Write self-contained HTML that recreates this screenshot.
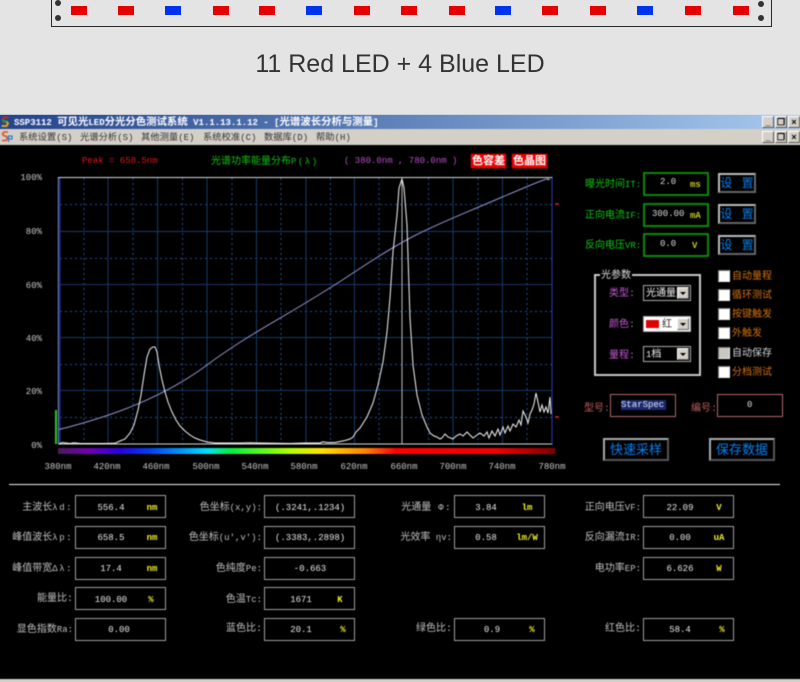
<!DOCTYPE html>
<html><head><meta charset="utf-8">
<style>
html,body{margin:0;padding:0;background:#e4e4e4}
#p{position:relative;width:800px;height:682px;overflow:hidden;background:#e4e4e4;font-family:"Liberation Mono","Noto Sans CJK SC",monospace;font-size:10px}
#p div,#p span.t{position:absolute}
.t{white-space:nowrap;line-height:12px}
.l{font-size:9px}
.w{font-size:9px;letter-spacing:1.5px}
.led{top:6px;width:16px;height:9px;background:#e60000}
.b{background:#0033f0!important}
.dot{width:6px;height:6px;border-radius:50%;background:#333}
.box{border:1px solid #a0a0a0;box-sizing:border-box;height:23px}
.lb{color:#c0c0c0;text-align:right;width:80px;margin-top:1px}
.v{color:#e8e8e8;text-align:center;width:70px;font-size:9px;margin-top:1px}
.u{color:#f0f020;text-align:center;width:40px;font-size:9px;font-weight:bold}
.gb{border:2px solid #0a8a0a;box-sizing:border-box;width:66px;height:24px;left:643px}
.gl{color:#10c810;font-size:10px;left:585px;margin-top:1px}
.set{left:718px;width:38px;height:20px;box-sizing:border-box;border:2px solid #888;border-color:#bbb #666 #666 #bbb;color:#0a80f0;text-align:center;line-height:16px;font-size:12px;word-spacing:6px;font-family:"Liberation Sans","Noto Sans CJK SC",sans-serif}
.ck{left:718px;width:10px;height:10px;background:#fff;border:1px solid #999;border-color:#777 #eee #eee #777}
.cl{left:732px;color:#d07010;font-size:10px;margin-top:3px}
.pl{color:#c858d8;left:609px;font-size:10px;margin-top:2px}
.cb{left:643px;width:48px;height:16px;box-sizing:border-box;border:1px solid #aaa;background:#000;color:#eee;font-size:10px;line-height:17px;padding-left:2px}
.ar{right:1px;top:1px;width:12px;height:12px;background:#d4d0c8;border:1px solid #eee;border-color:#fff #666 #666 #fff;box-sizing:border-box}
.ar:after{content:"";position:absolute;left:2px;top:4px;border:3px solid transparent;border-top:3px solid #000}
.wb{width:12px;height:12px;box-sizing:border-box;background:#d4d0c8;border:1px solid #888;border-color:#fff #555 #555 #fff;color:#000;font:bold 9px/10px "Liberation Sans",sans-serif;text-align:center}
.mn{color:#333;top:132px;font-size:9.3px}
.pk{color:#fff;background:#ee0000;top:154px;height:14px;width:35px;text-align:center;font:bold 11px/14px "Liberation Sans","Noto Sans CJK SC",sans-serif;box-shadow:0 0 1px #f00}
.bb{top:438px;width:66px;height:23px;box-sizing:border-box;border:2px solid #888;border-color:#aaa #555 #555 #aaa;color:#0a80f0;text-align:center;font:13px/19px "Liberation Sans","Noto Sans CJK SC",sans-serif}
.x{color:#c8c8c8;font-size:9px;top:461px;width:40px;text-align:center}
.y{color:#c8c8c8;font-size:9px;left:12px;width:30px;text-align:right;margin-top:1px}
#scr{filter:blur(.4px)}
</style></head><body><div id="p">

<div style="left:51px;top:-2px;width:721px;height:29px;border:1px solid #2a2a2a;box-sizing:border-box"></div>
<div class="dot" style="left:55px;top:0"></div><div class="dot" style="left:55px;top:15px"></div>
<div class="dot" style="left:758px;top:1px"></div><div class="dot" style="left:758px;top:15px"></div>
<div class="led" style="left:71px"></div><div class="led" style="left:118px"></div><div class="led b" style="left:165px"></div><div class="led" style="left:213px"></div><div class="led" style="left:259px"></div><div class="led b" style="left:306px"></div><div class="led" style="left:354px"></div><div class="led" style="left:401px"></div><div class="led" style="left:449px"></div><div class="led b" style="left:495px"></div><div class="led" style="left:542px"></div><div class="led" style="left:590px"></div><div class="led b" style="left:637px"></div><div class="led" style="left:685px"></div><div class="led" style="left:733px"></div>
<span class="t" style="left:0;width:800px;text-align:center;top:50px;font:25px/28px 'Liberation Sans',sans-serif;color:#333">11 Red LED + 4 Blue LED</span>

<!-- solid backing so the blur filter does not lighten the page edges -->
<div style="left:0;top:115px;width:800px;height:14px;background:linear-gradient(90deg,#24438d 0,#6083bb 50%,#a8caef 100%)"></div>
<div style="left:0;top:129px;width:800px;height:16px;background:#d4d0c8"></div>
<div style="left:0;top:145px;width:800px;height:534px;background:#000"></div>
<div style="left:0;top:679px;width:800px;height:3px;background:#d4d0c8"></div>

<div id="scr" style="left:0;top:0;width:800px;height:682px">
<div style="left:0;top:115px;width:800px;height:14px;background:linear-gradient(90deg,#24438d 0,#6083bb 50%,#a8caef 100%)"></div>
<div style="left:0;top:129px;width:800px;height:16px;background:#d4d0c8"></div>
<div style="left:0;top:145px;width:800px;height:534px;background:#000"></div>
<div style="left:0;top:679px;width:800px;height:3px;background:#d4d0c8"></div>

<svg style="position:absolute;left:0;top:115px" width="14" height="14" viewBox="0 0 14 14"><path d="M8 2.500H4L2.500 4.500" fill="none" stroke="#d02020" stroke-width="2"/><path d="M2.500 4.500L3.500 6.500H6.500" fill="none" stroke="#20a030" stroke-width="2"/><path d="M6.500 6.500L8 8.500L6.500 11H1.500" fill="none" stroke="#e0a020" stroke-width="2"/></svg>
<span class="t" style="left:14px;top:117px;color:#fff;font-weight:bold;font-size:10.4px"><span class="l">SSP3112 </span>可见光<span class="l">LED</span>分光分色测试系统<span class="l"> V1.1.13.1.12 - [</span>光谱波长分析与测量<span class="l">]</span></span>
<svg style="position:absolute;left:1px;top:130px" width="13" height="14" viewBox="0 0 13 14"><path d="M7 2H3L1.500 4L3 6H5L6.500 8L5 10.500H1" fill="none" stroke="#d85030" stroke-width="1.600"/><path d="M7.500 12V6H11V9H8" fill="none" stroke="#3080c0" stroke-width="1.300"/></svg>
<span class="t mn" style="left:19px">系统设置<span class="l">(S)</span></span>
<span class="t mn" style="left:80px">光谱分析<span class="l">(S)</span></span>
<span class="t mn" style="left:141px">其他测量<span class="l">(E)</span></span>
<span class="t mn" style="left:203px">系统校准<span class="l">(C)</span></span>
<span class="t mn" style="left:264px">数据库<span class="l">(D)</span></span>
<span class="t mn" style="left:316px">帮助<span class="l">(H)</span></span>
<div class="wb" style="left:762px;top:116px">_</div><div class="wb" style="left:775px;top:116px">&#10064;</div><div class="wb" style="left:788px;top:116px">×</div>
<div class="wb" style="left:762px;top:131px">_</div><div class="wb" style="left:775px;top:131px">&#10064;</div><div class="wb" style="left:788px;top:131px">×</div>

<span class="t" style="left:82px;top:155px;color:#e01818;font-size:9px">Peak = 658.5nm</span>
<span class="t" style="left:211px;top:156px;color:#10c010">光谱功率能量分布<span class="w">P(λ)</span></span>
<span class="t" style="left:344px;top:155px;color:#b850c8;font-size:9px">( 380.0nm , 780.0nm )</span>
<div class="pk" style="left:471px">色容差</div><div class="pk" style="left:512px">色晶图</div>

<svg style="position:absolute;left:0;top:0" width="800" height="682" viewBox="0 0 800 682">
<g fill="none" stroke="#143a68" stroke-width="1">
<path d="M108 178V444M157.500 178V444M207 178V444M256.500 178V444M306 178V444M354.500 178V444M453 178V444M502.500 178V444M60 231.500H552M60 284.500H552M60 337.500H552M60 390.500H552"/>
<path stroke="#1c5090" stroke-dasharray="2 3" d="M84 178V444M133 178V444M182.500 178V444M232 178V444M281 178V444M330.500 178V444M379 178V444M428.500 178V444M478 178V444M527 178V444M60 204.500H552M60 258.500H552M60 311.500H552M60 364.500H552M60 417.500H552"/>
</g>
<rect x="58.500" y="177.500" width="493.500" height="266.500" fill="none" stroke="#d8d8d8"/>
<path d="M59.500 178V444" stroke="#1a2f9a" stroke-width="2"/>
<path d="M552 178V444" stroke="#2a3fb0" stroke-width="1"/>
<path d="M402 179V444" stroke="#bbb" stroke-width="1"/>
<path d="M56 410V444" stroke="#2fc82f" stroke-width="2"/>
<path d="M555 204H559M555 417H559" stroke="#e02020" stroke-width="1.500"/>
<path fill="none" stroke="#9494d0" stroke-width="1" d="M59 429.500C105 418 160 400 207 365S290 315 353 273S430 228 500 198S540 183 550 179"/>
<path fill="none" stroke="#f4f4f4" stroke-width="1" d="M59 444L62 442.500L66 443L70 443.500L74 442.800L80 443.500L90 443.500L105 443.500L115 443.300L120 441L125 439L130 433L134 425L138 410L141 395L144 375L147 357L150 349L153 347L155 347L157 352L159 365L162 380L165 392L168 402L172 412L176 420L180 426L185 431L190 435L195 438L200 440L207 442L215 443L240 443L250 442.800L260 443L290 443.500L305 443L320 443L323 441.800L327 442.500L335 442.500L345 440.500L350 439L353 437L356 432L360 428L367 417L373 403L378 385L383 362L387 332L390 298L393 252L397 215L399 188L402 179L404 188L407 225L410 318L413 365L417 395L422 415L427 427L430 433L434 436L437 437L440 439L442 438L445 434L448 437L453 439L456 436L460 434L463 436L467 432L470 435L473 438L477 435L480 433L484 436L487 432L489 438L492 431L495 436L498 429L500 435L503 427L505 433L508 426L510 431L513 424L516 427L519 420L521 425L523 411L526 417L528 423L530 414L532 410L534 404L536 393L538 402L540 412L542 405L544 412L546 407L548 413L550 397L551 414"/>
</svg>
<div style="left:58px;top:448px;width:497px;height:6px;background:linear-gradient(90deg,#4a1a5a 0,#7000b0 6%,#2a00e0 12.500%,#0040f0 18.500%,#00e0ff 30%,#00f040 34.600%,#b0ff00 46.700%,#ffe000 53%,#ff8000 62%,#ff0000 68%,#f00000 88%,#800000 100%)"></div>

<span class="t y" style="top:171px">100%</span><span class="t y" style="top:225px">80%</span><span class="t y" style="top:279px">60%</span><span class="t y" style="top:332px">40%</span><span class="t y" style="top:385px">20%</span><span class="t y" style="top:439px">0%</span>
<span class="t x" style="left:38px">380nm</span><span class="t x" style="left:87px">420nm</span><span class="t x" style="left:136px">460nm</span><span class="t x" style="left:186px">500nm</span><span class="t x" style="left:235px">540nm</span><span class="t x" style="left:284px">580nm</span><span class="t x" style="left:334px">620nm</span><span class="t x" style="left:384px">660nm</span><span class="t x" style="left:433px">700nm</span><span class="t x" style="left:482px">740nm</span><span class="t x" style="left:532px">780nm</span>

<span class="t gl" style="top:178px">曝光时间<span class="l">IT:</span></span><div class="gb" style="top:172px"></div>
<span class="t" style="left:660px;top:176px;color:#ddd;font-size:9px">2.0</span><span class="t" style="left:690px;top:179px;color:#c8c820;font-size:9px;font-weight:bold">ms</span>
<div class="set" style="top:173px">设 置</div>
<span class="t gl" style="top:209px">正向电流<span class="l">IF:</span></span><div class="gb" style="top:203px"></div>
<span class="t" style="left:652px;top:208px;color:#ddd;font-size:9px">300.00</span><span class="t" style="left:690px;top:210px;color:#c8c820;font-size:9px;font-weight:bold">mA</span>
<div class="set" style="top:204px">设 置</div>
<span class="t gl" style="top:239px">反向电压<span class="l">VR:</span></span><div class="gb" style="top:233px"></div>
<span class="t" style="left:660px;top:238px;color:#ddd;font-size:9px">0.0</span><span class="t" style="left:692px;top:240px;color:#c8c820;font-size:9px;font-weight:bold">V</span>
<div class="set" style="top:235px">设 置</div>

<div style="left:594px;top:274px;width:107px;height:102px;box-sizing:border-box;border:2px solid #c8c8c8"></div>
<span class="t" style="left:600px;top:271px;background:#000;color:#ddd;padding:0 1px;font-size:10px">光参数</span>
<span class="t pl" style="top:287px">类型:</span><div class="cb" style="top:285px">光通量<div class="ar"></div></div>
<span class="t pl" style="top:318px">颜色:</span><div class="cb" style="top:316px;background:#fff;color:#222"><span class="t" style="left:2px;top:3px;width:13px;height:8px;background:#e00000;display:block"></span><span class="t" style="left:18px;top:3px">红</span><div class="ar"></div></div>
<span class="t pl" style="top:349px">量程:</span><div class="cb" style="top:346px"><span class="l">1</span>档<div class="ar"></div></div>

<div class="ck" style="top:270px"></div><span class="t cl" style="top:269px">自动量程</span>
<div class="ck" style="top:289px"></div><span class="t cl" style="top:288px">循环测试</span>
<div class="ck" style="top:308px"></div><span class="t cl" style="top:307px">按键触发</span>
<div class="ck" style="top:327px"></div><span class="t cl" style="top:326px">外触发</span>
<div class="ck" style="top:347px;background:#c8c8c0"></div><span class="t cl" style="top:346px;color:#d0d0d0">自动保存</span>
<div class="ck" style="top:366px"></div><span class="t cl" style="top:365px">分档测试</span>

<span class="t" style="left:584px;top:404px;color:#c05c5c">型号:</span>
<div style="left:610px;top:394px;width:66px;height:23px;box-sizing:border-box;border:1px solid #b06868"></div>
<div style="left:621px;top:400px;width:45px;height:10px;background:#1a2a70"></div>
<span class="t" style="left:621px;top:399px;color:#e8e8f0;font-size:9px">StarSpec</span>
<span class="t" style="left:691px;top:404px;color:#c05c5c">编号:</span>
<div style="left:717px;top:394px;width:66px;height:23px;box-sizing:border-box;border:1px solid #b06868"></div>
<span class="t" style="left:747px;top:399px;color:#ddd;font-size:9px">0</span>
<div class="bb" style="left:603px">快速采样</div><div class="bb" style="left:709px">保存数据</div>

<div style="left:9px;top:484px;width:771px;height:1px;background:#eee"></div>

<!-- column 1 -->
<span class="t lb" style="left:-7px;top:501px">主波长<span class="w">λd:</span></span><div class="box" style="left:75px;top:495px;width:91px"></div><span class="t v" style="left:76px;top:501px">556.4</span><span class="t u" style="left:132px;top:502px">nm</span>
<span class="t lb" style="left:-7px;top:531px">峰值波长<span class="w">λp:</span></span><div class="box" style="left:75px;top:526px;width:91px"></div><span class="t v" style="left:76px;top:531px">658.5</span><span class="t u" style="left:132px;top:532px">nm</span>
<span class="t lb" style="left:-7px;top:562px">峰值带宽<span class="w">Δλ:</span></span><div class="box" style="left:75px;top:557px;width:91px"></div><span class="t v" style="left:76px;top:562px">17.4</span><span class="t u" style="left:132px;top:563px">nm</span>
<span class="t lb" style="left:-7px;top:593px">能量比:</span><div class="box" style="left:75px;top:587px;width:91px"></div><span class="t v" style="left:76px;top:593px">100.00</span><span class="t u" style="left:131px;top:594px">%</span>
<span class="t lb" style="left:-7px;top:623px">显色指数<span class="l">Ra:</span></span><div class="box" style="left:75px;top:618px;width:91px"></div><span class="t v" style="left:84px;top:623px">0.00</span>
<!-- column 2 -->
<span class="t lb" style="left:182px;top:501px;width:80px">色坐标<span class="l">(x,y):</span></span><div class="box" style="left:264px;top:495px;width:91px"></div><span class="t v" style="left:275px;top:501px">(.3241,.1234)</span>
<span class="t lb" style="left:172px;top:531px;width:90px">色坐标<span class="l">(u',v'):</span></span><div class="box" style="left:264px;top:526px;width:91px"></div><span class="t v" style="left:275px;top:531px">(.3383,.2898)</span>
<span class="t lb" style="left:182px;top:562px">色纯度<span class="l">Pe:</span></span><div class="box" style="left:264px;top:557px;width:91px"></div><span class="t v" style="left:275px;top:562px">-0.663</span>
<span class="t lb" style="left:182px;top:593px">色温<span class="l">Tc:</span></span><div class="box" style="left:264px;top:587px;width:91px"></div><span class="t v" style="left:266px;top:593px">1671</span><span class="t u" style="left:320px;top:594px">K</span>
<span class="t lb" style="left:182px;top:623px">蓝色比:</span><div class="box" style="left:264px;top:618px;width:91px"></div><span class="t v" style="left:266px;top:623px">20.1</span><span class="t u" style="left:323px;top:624px">%</span>
<!-- column 3 -->
<span class="t lb" style="left:372px;top:501px">光通量<span class="w"> Φ:</span></span><div class="box" style="left:454px;top:495px;width:91px"></div><span class="t v" style="left:451px;top:501px">3.84</span><span class="t u" style="left:507px;top:502px">lm</span>
<span class="t lb" style="left:372px;top:531px">光效率<span class="l"> ηv:</span></span><div class="box" style="left:454px;top:526px;width:91px"></div><span class="t v" style="left:451px;top:531px">0.58</span><span class="t u" style="left:507px;top:532px">lm/W</span>
<span class="t lb" style="left:372px;top:623px">绿色比:</span><div class="box" style="left:454px;top:618px;width:91px"></div><span class="t v" style="left:457px;top:623px">0.9</span><span class="t u" style="left:512px;top:624px">%</span>
<!-- column 4 -->
<span class="t lb" style="left:561px;top:501px">正向电压<span class="l">VF:</span></span><div class="box" style="left:643px;top:495px;width:91px"></div><span class="t v" style="left:645px;top:501px">22.09</span><span class="t u" style="left:699px;top:502px">V</span>
<span class="t lb" style="left:561px;top:531px">反向漏流<span class="l">IR:</span></span><div class="box" style="left:643px;top:526px;width:91px"></div><span class="t v" style="left:645px;top:531px">0.00</span><span class="t u" style="left:699px;top:532px">uA</span>
<span class="t lb" style="left:561px;top:562px">电功率<span class="l">EP:</span></span><div class="box" style="left:643px;top:557px;width:91px"></div><span class="t v" style="left:645px;top:562px">6.626</span><span class="t u" style="left:699px;top:563px">W</span>
<span class="t lb" style="left:561px;top:623px">红色比:</span><div class="box" style="left:643px;top:618px;width:91px"></div><span class="t v" style="left:645px;top:623px">58.4</span><span class="t u" style="left:702px;top:624px">%</span>
</div>
</div></body></html>
